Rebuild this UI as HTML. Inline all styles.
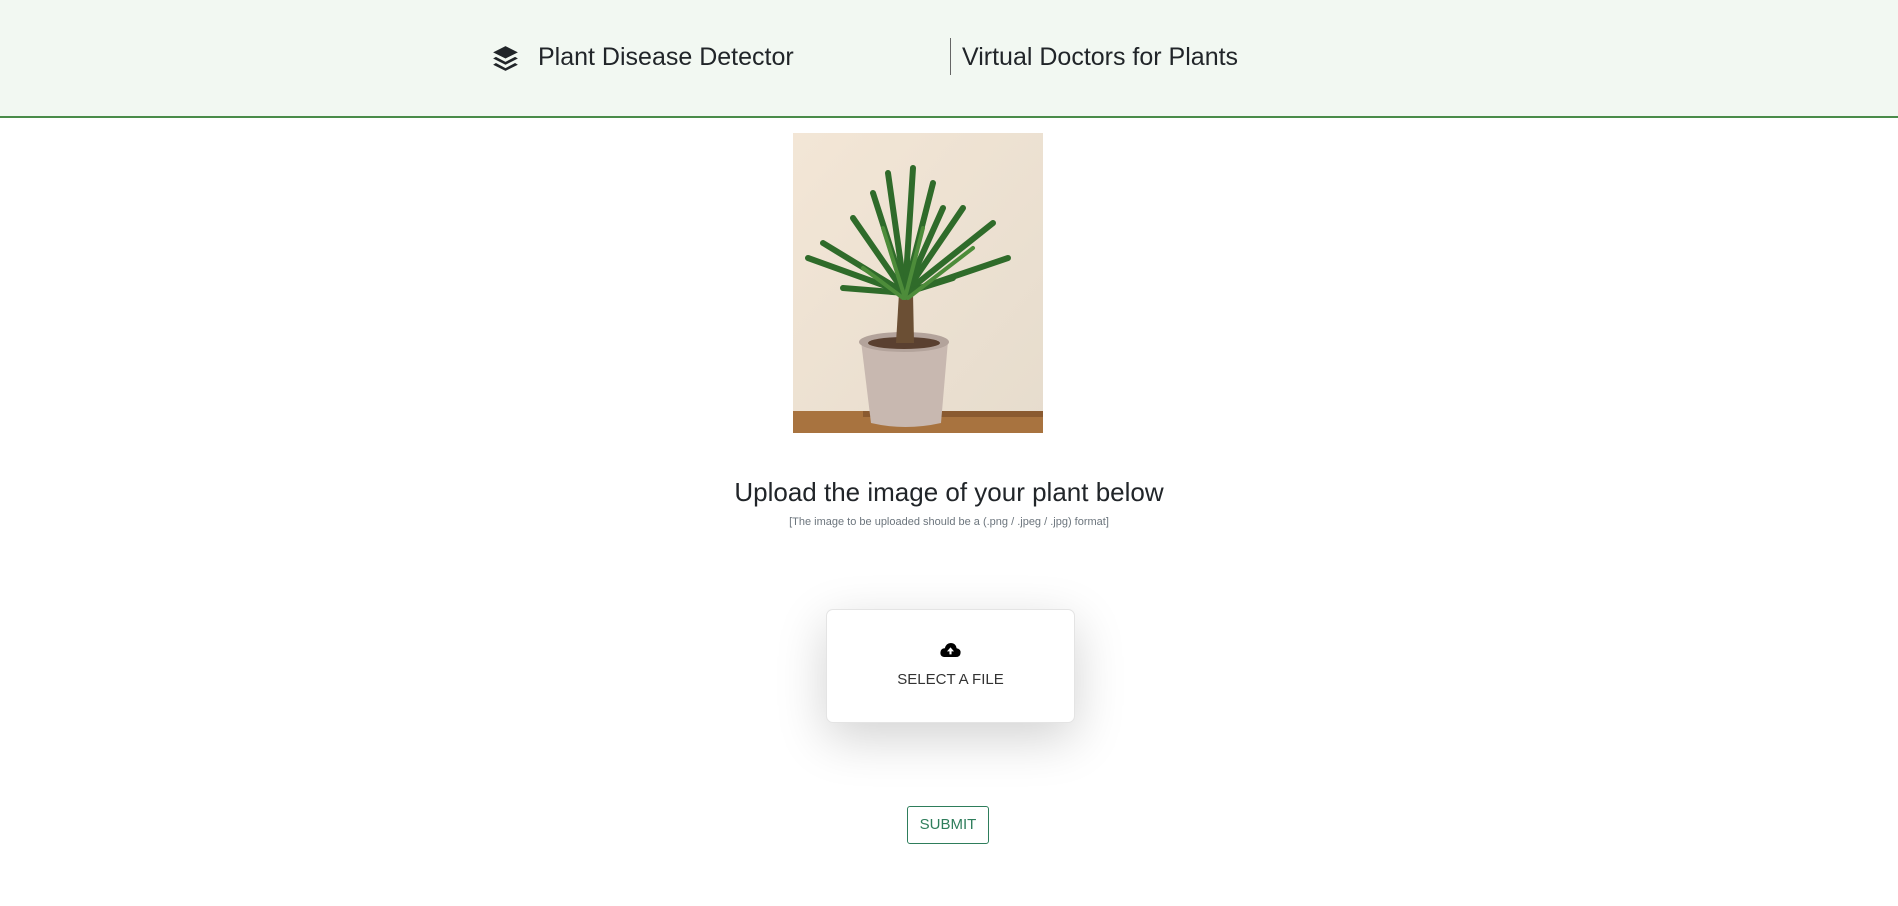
<!DOCTYPE html>
<html><head><meta charset="utf-8"><style>
*{margin:0;padding:0;box-sizing:border-box}
body{width:1898px;height:906px;background:#fff;font-family:"Liberation Sans",sans-serif;color:#212529;position:relative;overflow:hidden}
.hdr{position:absolute;left:0;top:0;width:1898px;height:118px;background:#f2f8f2;border-bottom:2px solid #4a8c4a}
.t{position:absolute;font-size:25px;white-space:nowrap}
.abs{position:absolute}
</style></head><body>
<div class="hdr">
<svg class="abs" style="left:492px;top:45px" width="27" height="27" viewBox="0 0 24 24"><path d="M12 1L1 6.5 12 12l11-5.5z" fill="#212529"/><path d="M3.5 10.5L1 12l11 5.5L23 12l-2.5-1.5L12 15z" fill="#212529"/><path d="M3.5 16L1 17.5 12 23l11-5.5-2.5-1.5L12 20.5z" fill="#212529"/></svg>
<div class="t" style="left:538px;top:43px">Plant Disease Detector</div>
<div class="abs" style="left:950px;top:38px;width:1px;height:37px;background:#666"></div>
<div class="t" style="left:962px;top:43px">Virtual Doctors for Plants</div>
</div>
<svg class="abs" style="left:793px;top:133px" width="250" height="300" viewBox="0 0 250 300">
<defs><linearGradient id="bg" x1="0" y1="0" x2="1" y2="1"><stop offset="0" stop-color="#f3e6d6"/><stop offset="1" stop-color="#e6dccd"/></linearGradient></defs>
<rect width="250" height="300" fill="url(#bg)"/>
<rect x="0" y="278" width="250" height="22" fill="#a8733f"/>
<rect x="70" y="278" width="180" height="6" fill="#8a5a30"/>
<path d="M68 208 L155 208 L148 290 Q112 298 78 290 Z" fill="#c8b8b0"/>
<ellipse cx="111" cy="209" rx="45" ry="10" fill="#b3a39b"/>
<ellipse cx="111" cy="210" rx="36" ry="6" fill="#5a4030"/>
<path d="M103 210 L106 160 L120 160 L121 210 Z" fill="#6b4f34"/>
<g stroke="#2f6b2a" stroke-width="6" stroke-linecap="round" fill="none">
<path d="M112 160 L80 60"/><path d="M112 160 L95 40"/><path d="M112 160 L120 35"/><path d="M112 160 L140 50"/><path d="M112 160 L170 75"/><path d="M112 160 L200 90"/><path d="M112 160 L30 110"/><path d="M112 160 L15 125"/><path d="M112 160 L60 85"/><path d="M112 160 L215 125"/><path d="M112 160 L160 145"/><path d="M112 160 L50 155"/><path d="M112 160 L150 75"/></g>
<g stroke="#4d8c3a" stroke-width="4" stroke-linecap="round" fill="none"><path d="M110 165 L70 135"/><path d="M115 165 L180 115"/><path d="M112 165 L130 95"/><path d="M112 165 L90 95"/></g>
</svg>
<div class="abs" style="left:0;width:1898px;top:477px;text-align:center;font-size:26px">Upload the image of your plant below</div>
<div class="abs" style="left:0;width:1898px;top:516px;text-align:center;font-size:11px;color:#6c757d">[The image to be uploaded should be a (.png / .jpeg / .jpg) format]</div>
<div class="abs" style="left:826px;top:609px;width:249px;height:114px;background:#fff;border:1px solid #e4e4e4;border-radius:7px;box-shadow:0 15px 50px rgba(0,0,0,0.18)"></div>
<svg class="abs" style="left:940px;top:642px" width="21" height="16" viewBox="0 0 24 18"><path d="M6 17 Q0 17 0.5 11.5 Q1 7 5.5 7 Q7 1 12.5 1 Q18 1 19 7 Q24 8 23.5 12.5 Q23 17 18 17Z" fill="#000"/><path d="M12 6 L8 10.5 H10.8 V14 H13.2 V10.5 H16Z" fill="#fff"/></svg>
<div class="abs" style="left:826px;width:249px;top:671px;text-align:center;font-size:15px;color:#333">SELECT A FILE</div>
<div class="abs" style="left:907px;top:806px;width:82px;height:38px;border:1px solid #2e7d5b;border-radius:3px;color:#2e7d5b;font-size:15px;text-align:center;line-height:36px">SUBMIT</div>
</body></html>
